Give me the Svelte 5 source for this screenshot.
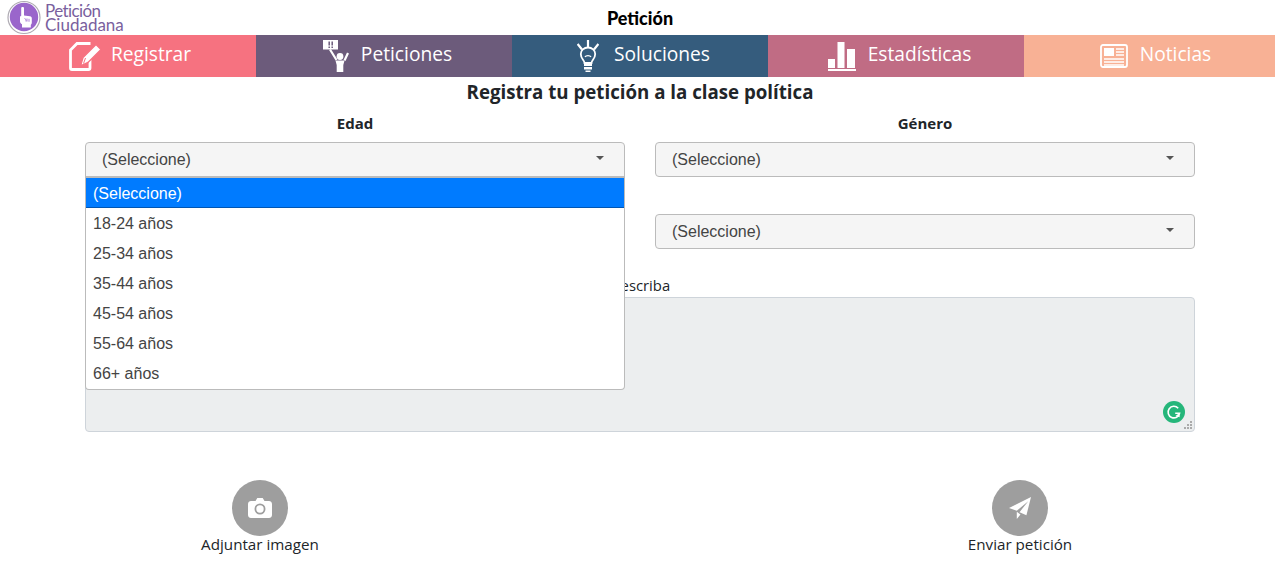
<script>
  const tabs = [
    { label: 'Registrar', color: '#f67280', icon: 'edit' },
    { label: 'Peticiones', color: '#6c5b7b', icon: 'protest' },
    { label: 'Soluciones', color: '#355c7d', icon: 'bulb' },
    { label: 'Estadísticas', color: '#c06c84', icon: 'chart' },
    { label: 'Noticias', color: '#f8b195', icon: 'news' }
  ];

  const ages = ['(Seleccione)', '18-24 años', '25-34 años', '35-44 años', '45-54 años', '55-64 años', '66+ años'];
</script>

<div class="page">
  <header class="top">
    <div class="logo">
      <svg width="36" height="35" viewBox="0 0 36 35">
        <circle cx="18" cy="17.5" r="16" fill="#fff" stroke="#aeaab2" stroke-width="1.2" />
        <circle cx="18" cy="17" r="14.2" fill="#9a66cb" />
        <path d="M15.200 8c0-1.300 2.800-1.300 2.800 0v7.500l6 .8c1.200.2 1.800.9 1.800 2v4.500c0 .9-.4 1.500-1 2v2.700H16V24.300c-1.200-.8-2-1.800-2-3.100v-3.900c0-.7.400-1.200 1.200-1.500z" fill="#fff" />
        <path d="M18.500 18.500l1.500 1v2M21 18.500v3M23 18.800v3" stroke="#9a66cb" stroke-width="0.8" fill="none" />
      </svg>
      <div class="logo-text"><span class="first-line">Petición</span><br />Ciudadana</div>
    </div>
    <div class="app-title">Petición</div>
  </header>

  <nav class="tabs">
    {#each tabs as tab}
      <div class="tab" style="background: {tab.color}">
        {#if tab.icon === 'edit'}
          <svg class="ico-edit" width="33" height="29" viewBox="0 0 33 29" fill="none">
            <path d="M21.500 1.500H8L1.500 8v18c0 1 .6 1.500 1.500 1.500h16.500c1 0 1.500-.6 1.500-1.500V14" stroke="#fff" stroke-width="2.800" />
            <path d="M11.500 24l2.500-8.500L27 2.500l5 5-13 13z" fill="#fff" stroke={tab.color} stroke-width="1.400" />
            <path d="M14.500 21.500l2-5.500" stroke={tab.color} stroke-width="1" />
          </svg>
        {:else if tab.icon === 'protest'}
          <svg width="26" height="32" viewBox="0 0 26 32">
            <rect x="0" y="0" width="15" height="9.500" fill="#fff" />
            <path d="M6.200 1.500v4M6.200 6.500v1.500M9.200 1.500v4M9.200 6.500v1.500" stroke={tab.color} stroke-width="1.500" />
            <path d="M7 9.500l6.500 10.500M25 13l-3.500 7.500" stroke="#fff" stroke-width="2.200" fill="none" />
            <path d="M12.500 20.500h9l-1.200 4.500v7h-6.600v-7z" fill="#fff" />
            <circle cx="17" cy="16.500" r="3.400" fill="#fff" />
          </svg>
        {:else if tab.icon === 'bulb'}
          <svg class="ico-bulb" width="22" height="32" viewBox="0 0 22 32" fill="none" stroke="#fff">
            <path d="M11 0v7M.6 4l4.400 5.500M21.400 4L17 9.500" stroke-width="2.200" />
            <path d="M7.500 23c0-3-3.700-4-3.700-9 0-3.800 3.200-6.500 7.200-6.500s7.200 2.700 7.200 6.500c0 5-3.700 6-3.700 9z" stroke-width="1.800" />
            <path d="M8 17c1-1.800 5-1.800 6 0" stroke-width="1.400" />
            <path d="M7 23.500h8v2.500H7zM7 27h8v2.500H7zM8.500 30.500h5V32h-5z" fill="#fff" stroke="none" />
          </svg>
        {:else if tab.icon === 'chart'}
          <svg width="28" height="29" viewBox="0 0 28 29" fill="#fff">
            <rect x="0" y="17" width="7" height="9" />
            <rect x="9.500" y="0" width="7" height="26" />
            <rect x="19" y="7" width="8" height="19" />
            <rect x="0" y="27" width="28" height="2" />
          </svg>
        {:else}
          <svg width="28" height="24" viewBox="0 0 28 24" fill="none" stroke="#fff">
            <rect x="1" y="1" width="26" height="22" rx="2" stroke-width="1.800" />
            <rect x="4" y="4" width="10" height="8" fill="#fff" stroke="none" />
            <path d="M16 5h8M16 8h8M16 11h8M4 15h20M4 18h20M4 21h20" stroke-width="1.400" />
          </svg>
        {/if}
        <span>{tab.label}</span>
      </div>
    {/each}
  </nav>

  <main class="form">
    <h1>Registra tu petición a la clase política</h1>

    <div class="fields">
      <div class="field">
        <div class="field-label">Edad</div>
        <div class="select open">
          <span>(Seleccione)</span><i class="caret"></i>
          <ul class="menu">
            {#each ages as age, i}
              <li class:active={i === 0}>{age}</li>
            {/each}
          </ul>
        </div>
      </div>
      <div class="field">
        <div class="field-label">Género</div>
        <div class="select"><span>(Seleccione)</span><i class="caret"></i></div>
      </div>
      <div class="field second">
        <div class="select"><span>(Seleccione)</span><i class="caret"></i></div>
      </div>
      <div class="field second">
        <div class="select"><span>(Seleccione)</span><i class="caret"></i></div>
      </div>
    </div>

    <div class="describe">
      <label for="detalle">Describa</label>
      <div class="text-wrap">
        <textarea id="detalle"></textarea>
        <svg class="grammarly" width="22" height="22" viewBox="0 0 22 22">
          <circle cx="11" cy="11" r="11" fill="#25b67a" />
          <path d="M15.200 7.200A5.800 5.800 0 1 0 16.600 12.200h-4.400" fill="none" stroke="#fff" stroke-width="1.600" />
          <path d="M12.500 15l3.800-3 .4 4.200z" fill="#fff" />
        </svg>
        <svg class="grip" width="9" height="9" viewBox="0 0 9 9" fill="#aaa">
          <rect x="6" y="0" width="2" height="2" />
          <rect x="3" y="3" width="2" height="2" />
          <rect x="6" y="3" width="2" height="2" />
          <rect x="0" y="6" width="2" height="2" />
          <rect x="3" y="6" width="2" height="2" />
          <rect x="6" y="6" width="2" height="2" />
        </svg>
      </div>
    </div>

    <div class="actions">
      <button type="button">
        <span class="round">
          <svg width="24" height="20" viewBox="0 0 24 20">
            <path d="M3 3h4.500l1.800-3h5.400l1.800 3H21c1.500 0 3 1.200 3 3v11c0 1.800-1.500 3-3 3H3c-1.500 0-3-1.200-3-3V6c0-1.800 1.500-3 3-3z" fill="#fff" />
            <circle cx="12" cy="11" r="4.600" fill="none" stroke="#9e9e9e" stroke-width="1.800" />
          </svg>
        </span>
        Adjuntar imagen
      </button>
      <button type="button">
        <span class="round">
          <svg width="22" height="22" viewBox="0 0 24 24">
            <path d="M24 0L19 20 11.500 16.500 21 4.500 8.500 15 0 12z" fill="#fff" />
            <path d="M8.500 16v8l4-5z" fill="#fff" />
          </svg>
        </span>
        Enviar petición
      </button>
    </div>
  </main>
</div>

<style>
  :global(body) {
    margin: 0;
    overflow: hidden;
    background: #fff;
  }

  .page {
    width: 1280px;
    height: 571px;
    overflow: hidden;
    font-family: "Open Sans", sans-serif;
    color: #212529;
  }

  .top {
    position: relative;
    height: 35px;
    display: flex;
    align-items: center;
    justify-content: center;
  }

  .logo {
    position: absolute;
    left: 6px;
    top: 0;
    display: flex;
    align-items: center;
    gap: 3px;
  }

  .logo-text {
    font-family: Lato, sans-serif;
    font-size: 17px;
    line-height: 14px;
    color: #7a5f9e;
  }

  .first-line {
    letter-spacing: -0.6px;
  }

  .app-title {
    font-family: Lato, sans-serif;
    font-weight: 900;
    font-size: 18px;
    color: #000;
  }

  .tabs {
    display: grid;
    grid-template-columns: repeat(5, 256px);
    height: 42px;
  }

  .tab {
    display: flex;
    align-items: center;
    justify-content: center;
    gap: 12px;
    padding-left: 7px;
    color: #fff;
    font-size: 19.200px;
    line-height: 38px;
  }

  .tab span {
    padding-bottom: 4px;
  }

  .ico-edit {
    margin-left: -3px;
    margin-right: -3px;
  }

  .ico-bulb {
    margin-right: 3px;
  }

  .form {
    padding: 0 85px;
  }

  h1 {
    margin: 0;
    height: 30px;
    line-height: 30px;
    font-size: 18.700px;
    font-weight: 700;
    text-align: center;
  }

  .fields {
    display: grid;
    grid-template-columns: 540px 540px;
    column-gap: 30px;
  }

  .field-label {
    height: 35px;
    line-height: 33px;
    font-size: 15px;
    font-weight: 700;
    text-align: center;
  }

  .second {
    margin-top: 37px;
  }

  .select {
    position: relative;
    box-sizing: border-box;
    height: 35px;
    display: flex;
    align-items: center;
    justify-content: space-between;
    padding: 0 20px 0 16px;
    background: #f5f5f5;
    border: 1px solid #bbb;
    border-radius: 4px;
    font-family: "Liberation Sans", sans-serif;
    font-size: 16px;
    color: #444;
  }

  .select.open {
    border-radius: 4px 4px 0 0;
  }

  .caret {
    border-left: 4px solid transparent;
    border-right: 4px solid transparent;
    border-top: 4px solid #555;
    margin-top: -4px;
  }

  .menu {
    position: absolute;
    z-index: 5;
    left: -1px;
    right: -1px;
    top: 33px;
    margin: 0;
    padding: 0 0 1px;
    list-style: none;
    background: #fff;
    border: 1px solid #bbb;
    border-top-width: 2px;
    border-radius: 0 0 4px 4px;
  }

  .menu li {
    height: 30px;
    line-height: 32px;
    padding: 0 7px;
    color: #444;
  }

  .menu li.active {
    background: #007bff;
    color: #fff;
    box-shadow: inset 0 -1px 0 #0056b3;
  }

  .describe {
    margin-top: 26px;
  }

  .describe label {
    display: block;
    height: 22px;
    line-height: 20px;
    font-size: 14.800px;
    text-align: center;
  }

  .text-wrap {
    position: relative;
    height: 135px;
  }

  textarea {
    display: block;
    box-sizing: border-box;
    width: 100%;
    height: 135px;
    padding: 6px 12px;
    background: #eceeef;
    border: 1px solid #ced4da;
    border-radius: 4px;
    outline: none;
    resize: none;
  }

  .grammarly {
    position: absolute;
    right: 10px;
    bottom: 9px;
  }

  .grip {
    position: absolute;
    right: 2px;
    bottom: 2px;
  }

  .actions {
    display: flex;
    justify-content: space-between;
    margin: 48px -85px 0;
  }

  button {
    width: 520px;
    display: flex;
    flex-direction: column;
    align-items: center;
    padding: 0;
    border: 0;
    background: none;
    font-family: "Open Sans", sans-serif;
    font-size: 15.200px;
    line-height: 16px;
    color: #212529;
  }

  .round {
    width: 56px;
    height: 56px;
    border-radius: 50%;
    background: #9e9e9e;
    display: flex;
    align-items: center;
    justify-content: center;
  }
</style>
